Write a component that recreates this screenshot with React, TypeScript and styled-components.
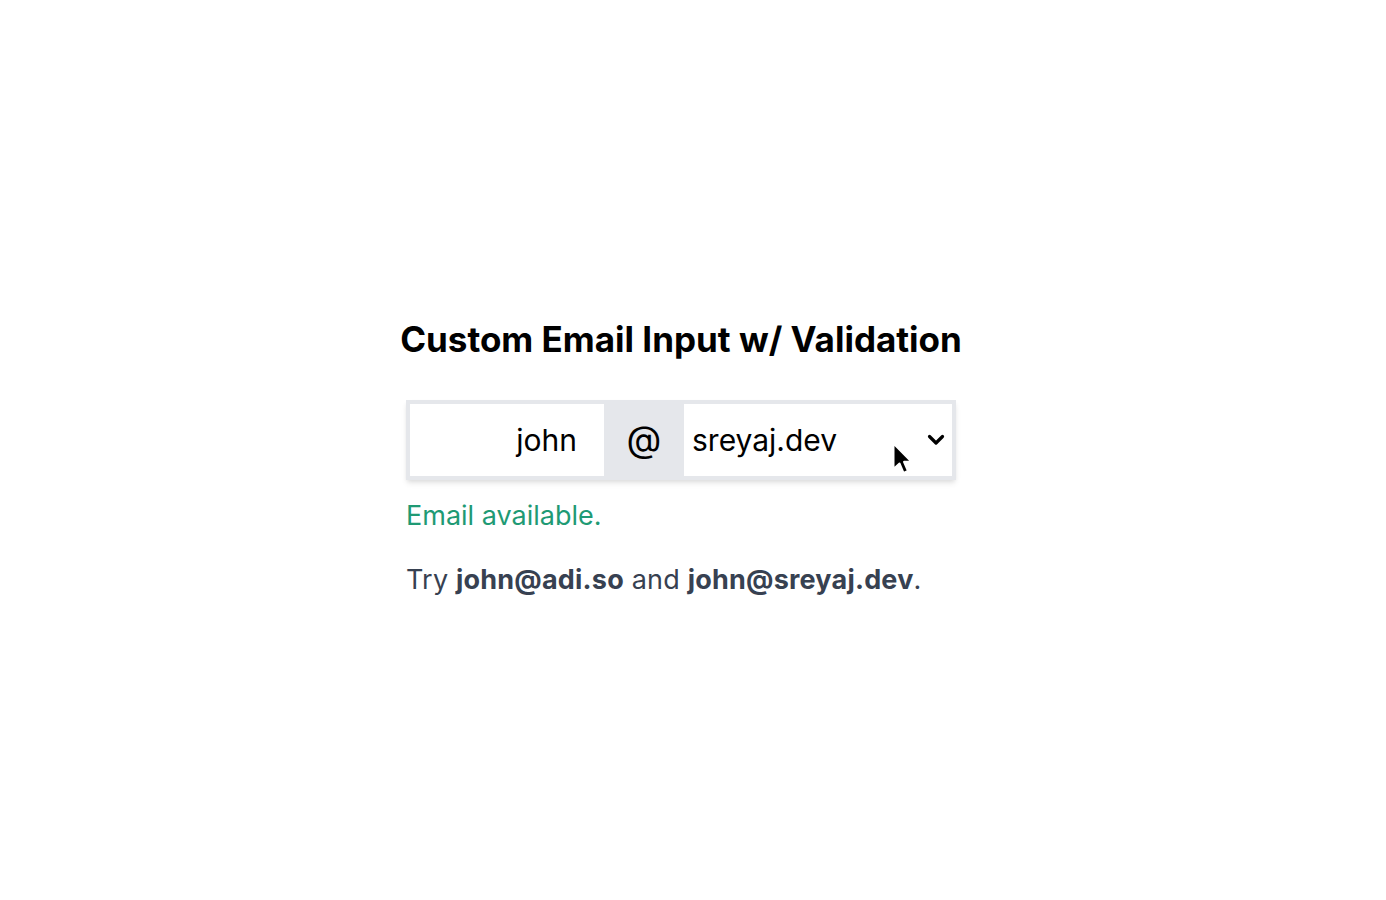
import React, { useState } from "react";
import styled, { createGlobalStyle } from "styled-components";

const Global = createGlobalStyle`
  html, body { margin: 0; padding: 0; background: #ffffff; }
  body { font-family: Inter, "Noto Sans", sans-serif; color: #000; }
`;

const Page = styled.div`
  display: flex;
  justify-content: center;
  padding: 318px 24px 0 0;
  min-height: 900px;
  box-sizing: border-box;
`;

const Column = styled.div`
  width: 550px;
  display: flex;
  flex-direction: column;
  align-items: stretch;
`;

const Title = styled.h1`
  margin: 0 -40px;
  font-size: 35px;
  line-height: 42px;
  font-weight: 700;
  text-align: center;
  white-space: nowrap;
`;

const Group = styled.div`
  margin-top: 40px;
  display: flex;
  border: 4px solid #e5e7eb;
  height: 72px;
  box-shadow: 0 4px 6px -1px rgba(0, 0, 0, 0.1), 0 2px 4px -1px rgba(0, 0, 0, 0.06);
`;

const UserInput = styled.input`
  width: 194px;
  box-sizing: border-box;
  border: none;
  outline: none;
  background: #fff;
  text-align: right;
  padding: 0 27px 0 8px;
  font-family: Inter, "Noto Sans", sans-serif;
  font-size: 30px;
  color: #000;
`;

const At = styled.div`
  width: 80px;
  background: #e5e7eb;
  display: flex;
  align-items: center;
  justify-content: center;
  font-size: 36px;
  color: #000;
  padding-bottom: 2px;
  box-sizing: border-box;
`;

const SelectWrap = styled.div`
  position: relative;
  flex: 1;
  display: flex;
`;

const DomainSelect = styled.select`
  appearance: none;
  -webkit-appearance: none;
  flex: 1;
  border: none;
  outline: none;
  background: #fff;
  padding: 0 40px 0 8px;
  font-family: Inter, "Noto Sans", sans-serif;
  font-size: 30px;
  color: #000;
`;

const Chevron = styled.svg`
  position: absolute;
  right: 7px;
  top: 30px;
  width: 18px;
  height: 12px;
  pointer-events: none;
`;

const Cursor = styled.svg`
  position: absolute;
  left: 208px;
  top: 37px;
  width: 22px;
  height: 38px;
  pointer-events: none;
`;

const Status = styled.p`
  margin: 20px 0 0;
  font-size: 27px;
  line-height: 32px;
  color: #1f9a74;
`;

const Hint = styled.p`
  margin: 32px 0 0;
  font-size: 27px;
  line-height: 32px;
  color: #374151;
  white-space: nowrap;
  letter-spacing: 0.2px;
`;

const Strong = styled.b`
  font-weight: 700;
`;

export default function App() {
  const [user, setUser] = useState("john");
  const [domain, setDomain] = useState("sreyaj.dev");
  return (
    <>
      <Global />
      <Page>
        <Column>
          <Title>Custom Email Input w/ Validation</Title>
          <Group>
            <UserInput value={user} onChange={(e) => setUser(e.target.value)} />
            <At>@</At>
            <SelectWrap>
              <DomainSelect value={domain} onChange={(e) => setDomain(e.target.value)}>
                <option value="sreyaj.dev">sreyaj.dev</option>
                <option value="adi.so">adi.so</option>
              </DomainSelect>
              <Chevron viewBox="0 0 18 12">
                <path d="M2.5 2.5 L9 9 L15.5 2.5" fill="none" stroke="#000" strokeWidth="3.2" strokeLinecap="round" strokeLinejoin="round" />
              </Chevron>
              <Cursor viewBox="0 0 22 36">
                <path d="M1.5 1.5 L1.5 27 L7.5 21.5 L11.5 31 L16 29 L12 19.8 L19.5 19.8 Z" fill="#000" stroke="#fff" strokeWidth="2" strokeLinejoin="round" />
              </Cursor>
            </SelectWrap>
          </Group>
          <Status>Email available.</Status>
          <Hint>
            Try <Strong>john@adi.so</Strong> and <Strong>john@sreyaj.dev</Strong>.
          </Hint>
        </Column>
      </Page>
    </>
  );
}
